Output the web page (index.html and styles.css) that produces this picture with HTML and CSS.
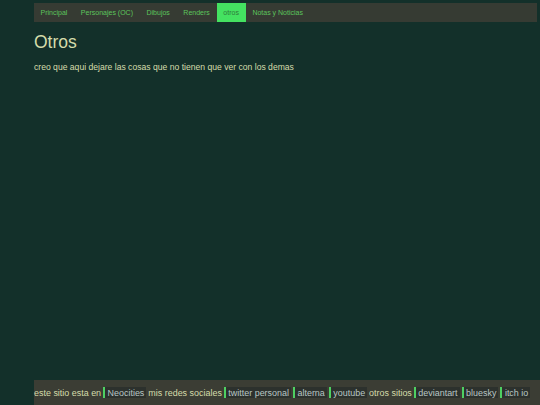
FILE: index.html
```html
<!DOCTYPE html>
<html lang="es">
<head>
<meta charset="utf-8">
<title>Otros</title>
<link rel="stylesheet" href="styles.css">
</head>
<body>
<div class="page">
  <nav class="nav">
    <a class="nav-item" href="#">Principal</a>
    <a class="nav-item" href="#">Personajes (OC)</a>
    <a class="nav-item" href="#">Dibujos</a>
    <a class="nav-item" href="#">Renders</a>
    <a class="nav-item active" href="#">otros</a>
    <a class="nav-item" href="#">Notas y Noticias</a>
  </nav>
  <main class="content">
    <h1 class="title">Otros</h1>
    <p class="text">creo que aqui dejare las cosas que no tienen que ver con los demas</p>
  </main>
  <footer class="footer">
    <span class="label">este sitio esta en</span>
    <a class="flink" href="#">Neocities</a>
    <span class="label">mis redes sociales</span>
    <a class="flink" href="#">twitter personal</a>
    <a class="flink" href="#">alterna</a>
    <a class="flink" href="#">youtube</a>
    <span class="label">otros sitios</span>
    <a class="flink" href="#">deviantart</a>
    <a class="flink" href="#">bluesky</a>
    <a class="flink" href="#">itch io</a>
  </footer>
</div>
</body>
</html>
```
FILE: styles.css
```css
html, body {
  margin: 0;
  padding: 0;
  height: 100%;
}
body {
  background: #13302a;
  font-family: "Liberation Sans", Arial, sans-serif;
  color: #d5dcaa;
}
.page {
  display: flex;
  flex-direction: column;
  height: 405px;
  padding-left: 34px;
  box-sizing: border-box;
}
.nav {
  display: flex;
  margin-top: 3px;
  margin-right: 3px;
  height: 19px;
  background: #363b33;
}
.nav-item {
  display: flex;
  align-items: center;
  padding: 0 7px 0 6.5px;
  font-size: 7px;
  color: #5cc45c;
  text-decoration: none;
}
.nav-item.active {
  background: #44e261;
  color: #2e7a3a;
}
.content {
  flex: 1;
}
.title {
  margin: 9.5px 0 0 0;
  font-size: 17.5px;
  font-weight: normal;
  line-height: 20px;
  color: #d5dcaa;
}
.text {
  margin: 10.3px 0 0 0;
  font-size: 8.6px;
  color: #d5dcaa;
}
.footer {
  display: flex;
  align-items: center;
  height: 25px;
  background: #3b3d34;
  font-size: 8.95px;
  white-space: nowrap;
}
.label {
  color: #d5dcaa;
  margin-right: 2px;
}
.flink {
  display: flex;
  align-items: center;
  height: 11px;
  background: #2c312d;
  color: #b9c6c4;
  text-decoration: none;
  border-left: 2.5px solid #4ed062;
  padding: 0 2px 0 2.5px;
  margin-right: 2px;
}
```
